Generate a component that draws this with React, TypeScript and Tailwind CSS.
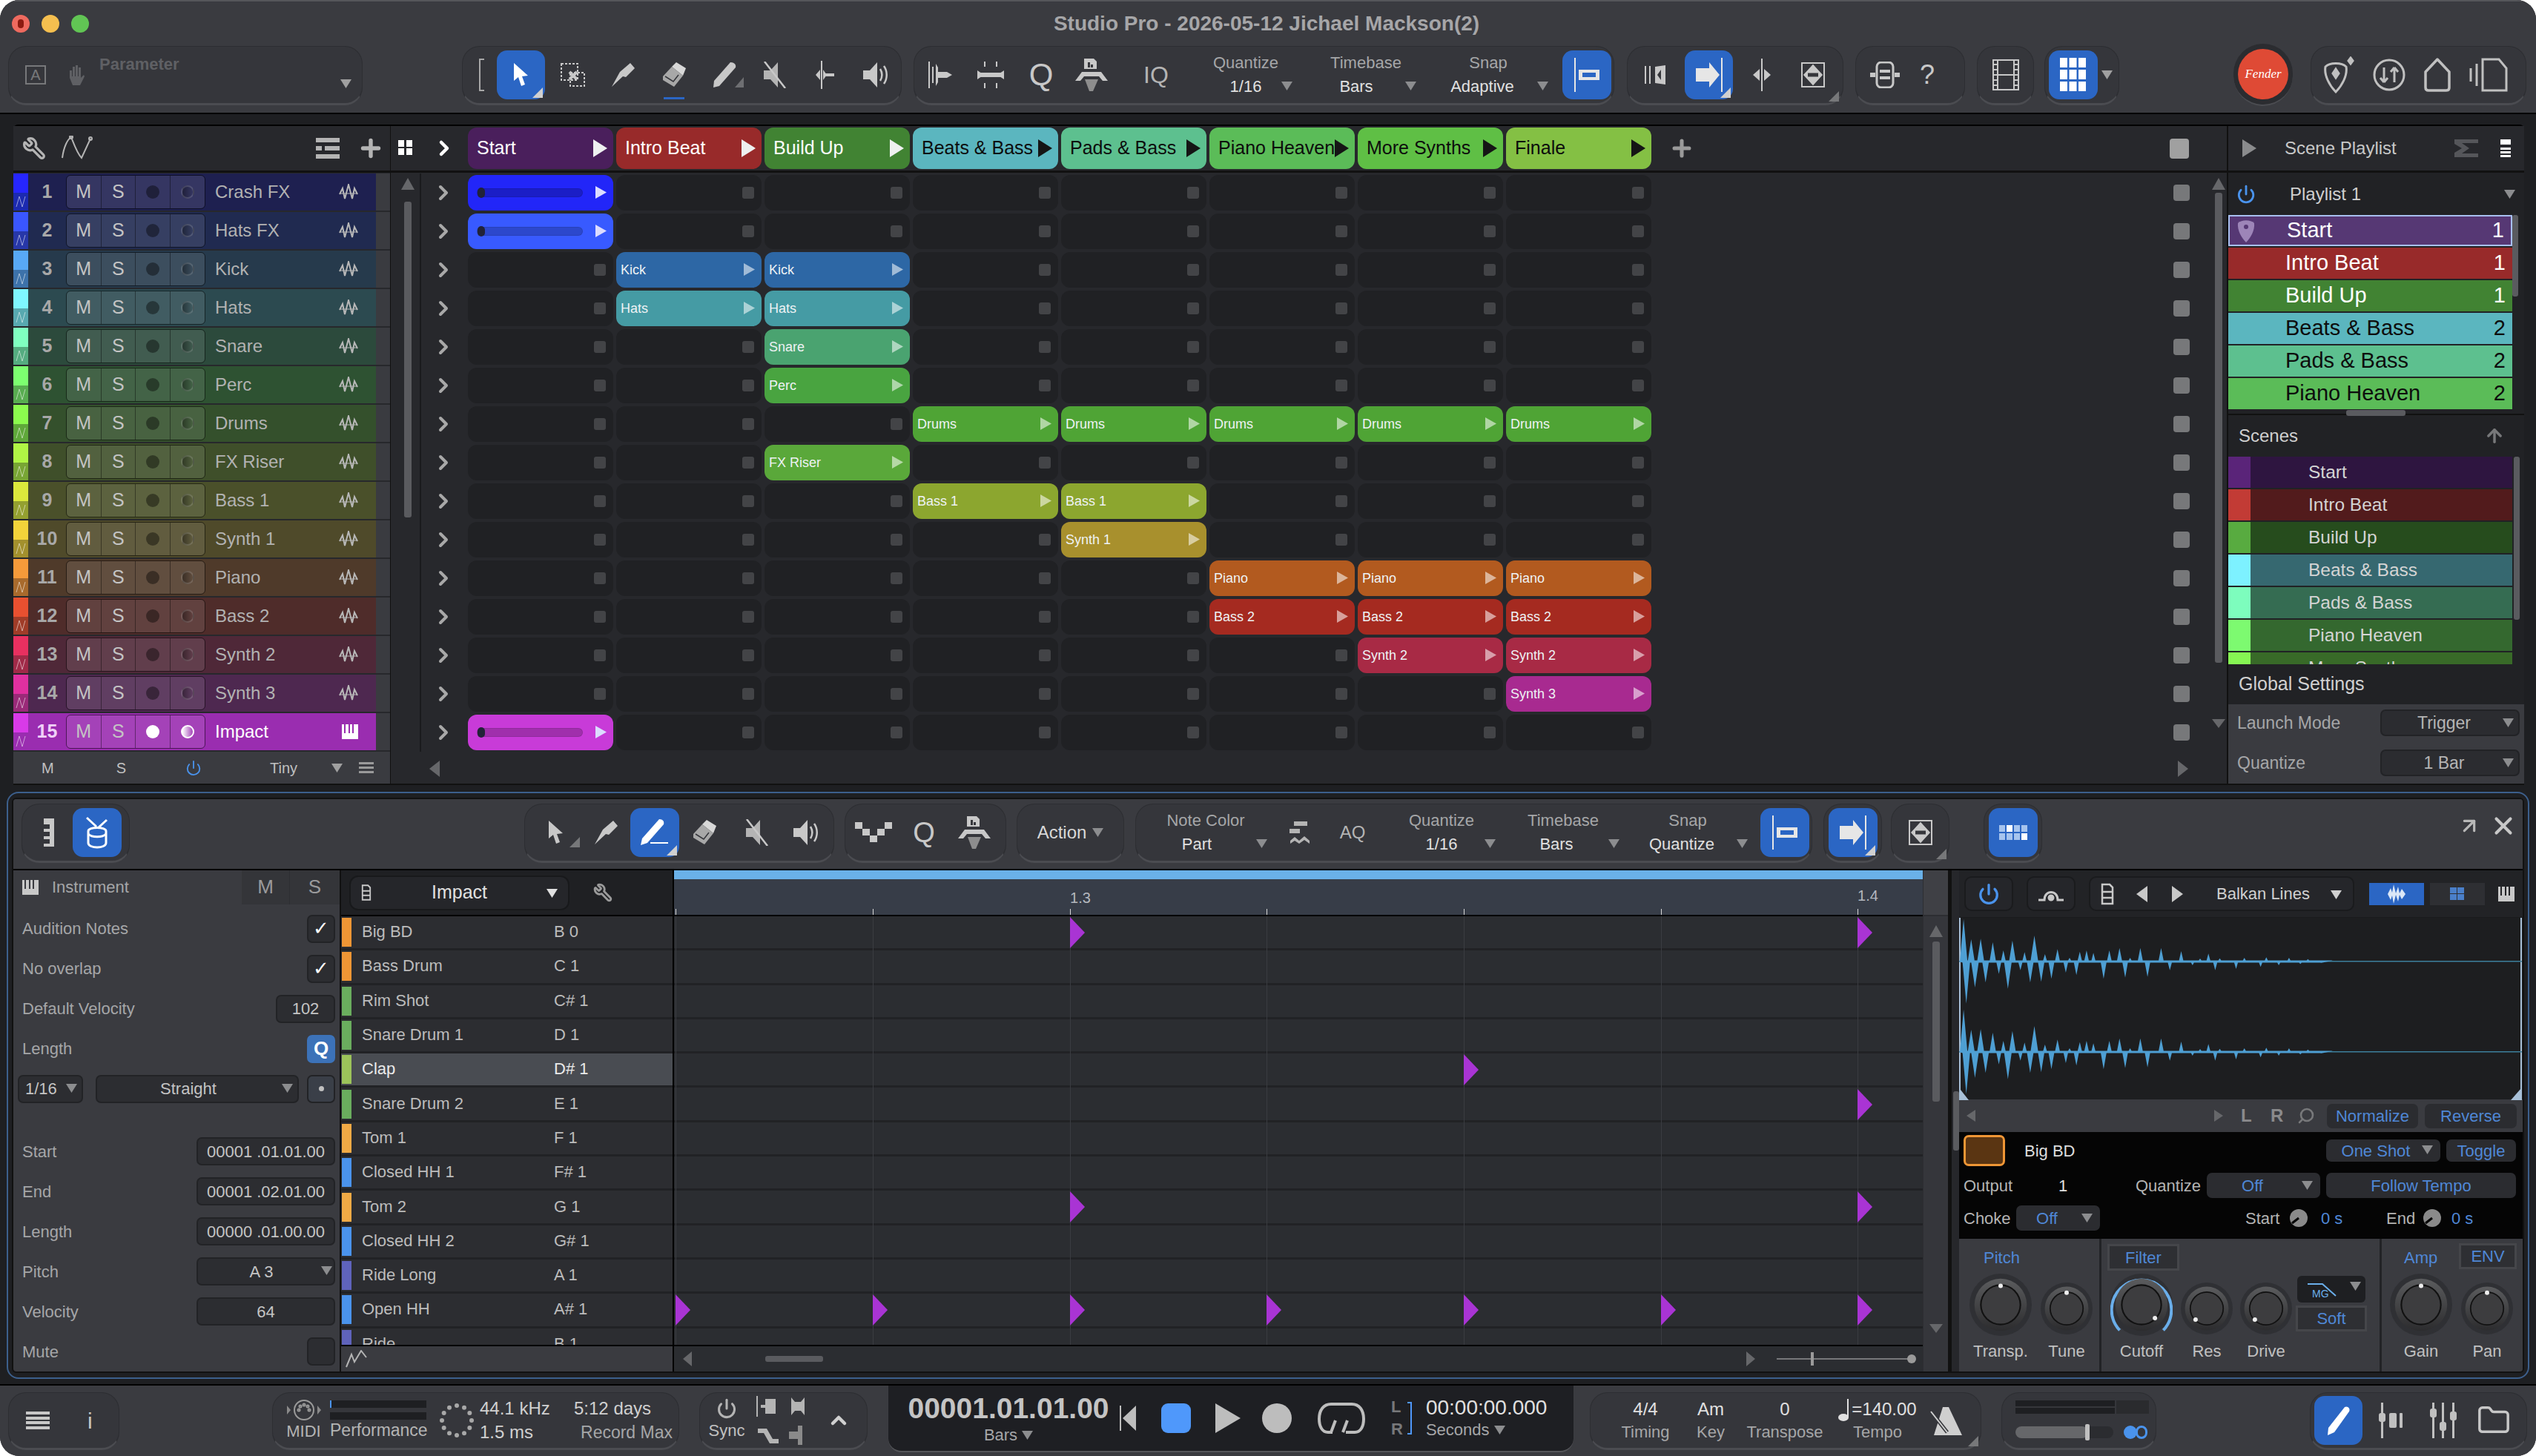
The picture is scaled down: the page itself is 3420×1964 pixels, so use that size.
import type { ReactNode } from 'react';
import { ChevronRight, ChevronUp, Power, Wrench, X, Folder, ArrowUp, ArrowUpRight, Search, Plus } from 'lucide-react';

const Caret = ({ className = '' }: { className?: string }) => (
  <svg width="15" height="12" viewBox="0 0 15 12" className={`fill-[#8c8d8f] ${className}`}>
    <path d="M0 0H15L7.5 12Z" />
  </svg>
);

const Tri = ({ w, h, className = '' }: { w: number; h: number; className?: string }) => (
  <svg width={w} height={h} viewBox={`0 0 ${w} ${h}`} className={className}>
    <path d={`M0 0L${w} ${h / 2}L0 ${h}Z`} />
  </svg>
);

const Fold = ({ className = 'fill-[#d0d0d0]' }: { className?: string }) => (
  <svg width="14" height="14" viewBox="0 0 14 14" className={`absolute bottom-[2px] right-[3px] ${className}`}>
    <path d="M14 0V14H0Z" />
  </svg>
);

const ArrowTool = ({ cls = 'fill-[#c8c8c8]' }: { cls?: string }) => (
  <svg width="22" height="32" viewBox="0 0 22 32" className={cls}><path d="M1 0V24L7 19L11 31L16 29L12 18L20 17Z" /></svg>
);
const RangeTool = () => (
  <svg width="34" height="32" viewBox="0 0 34 32" fill="none" stroke="#c8c8c8" strokeWidth="2" strokeDasharray="3 2">
    <rect x="1" y="1" width="22" height="22" /><rect x="13" y="13" width="19" height="18" />
    <path d="M12 12L22 22M22 12L12 22" strokeDasharray="none" strokeWidth="4" />
  </svg>
);
const Knife = () => (
  <svg width="34" height="32" viewBox="0 0 34 32" fill="#c8c8c8"><path d="M28 0L34 7L22 19L18 18L3 32L14 12Z" /></svg>
);
const Eraser = () => (
  <svg width="34" height="34" viewBox="0 0 34 34">
    <path d="M20 0L33 8L29 18L14 6Z" fill="#d8d8d8" />
    <path d="M14 6L29 18L17 33L2 24L2 19Z" fill="#a8a8a8" />
    <path d="M5 19L16 26L23 17" stroke="#35363b" strokeWidth="1.5" fill="none" />
  </svg>
);
const Pencil = () => (
  <svg width="32" height="34" viewBox="0 0 32 34" fill="#c8c8c8"><path d="M24 0C29 0 32 3 31 7L9 32L1 34L2 25Z" /></svg>
);
const PenLine = () => (
  <svg width="40" height="36" viewBox="0 0 40 36" fill="#fff">
    <path d="M26 0C31 0 33 3 32 7L10 32L1 35L3 26Z" /><rect x="14" y="31" width="24" height="2" />
  </svg>
);
const Mute = () => (
  <svg width="34" height="36" viewBox="0 0 34 36">
    <path d="M2 12H11L21 1V35L11 24H2Z" fill="#b4b4b4" /><path d="M3 0L31 36" stroke="#c8c8c8" strokeWidth="2.5" />
  </svg>
);
const Bend = () => (
  <svg width="28" height="38" viewBox="0 0 28 38" fill="#c8c8c8">
    <rect x="8" y="0" width="2" height="38" /><path d="M11 12L16 19L11 26ZM7 12V26L1 19Z" /><rect x="12" y="17" width="14" height="4" />
  </svg>
);
const Speaker = () => (
  <svg width="36" height="36" viewBox="0 0 36 36">
    <path d="M1 12H10L20 1V35L10 24H1Z" fill="#c8c8c8" />
    <path d="M24 10C27 15 27 21 24 26M29 6C34 13 34 23 29 30" fill="none" stroke="#c8c8c8" strokeWidth="2.5" />
  </svg>
);
const Stamp = () => (
  <svg width="46" height="44" viewBox="0 0 46 44">
    <path d="M13 0H26L30 4V14H13Z" fill="#c8c8c8" /><rect x="18" y="5" width="3" height="7" fill="#35363b" /><rect x="22" y="8" width="3" height="4" fill="#35363b" />
    <path d="M10 18H36L45 30H38L33 24H13L8 30H1Z" fill="#c8c8c8" /><path d="M14 28H32L25 44H20Z" fill="#8d8d8d" />
  </svg>
);
const Strum = () => (
  <svg width="34" height="36" viewBox="0 0 34 36" fill="#c8c8c8">
    <rect x="1" y="0" width="2" height="36" /><rect x="6" y="7" width="2" height="22" /><path d="M11 3L14 8V14L26 14L33 18L26 22H14V28L11 33Z" />
  </svg>
);
const Stretch = () => (
  <svg width="38" height="36" viewBox="0 0 38 36" fill="#c8c8c8">
    <rect x="10" y="0" width="2" height="7" /><rect x="26" y="0" width="2" height="7" /><rect x="10" y="29" width="2" height="7" /><rect x="26" y="29" width="2" height="7" />
    <path d="M1 12L10 18L1 24ZM37 12L28 18L37 24Z" /><path d="M4 15H34V21H4Z" />
  </svg>
);
const SnapLeft = () => (
  <svg width="34" height="46" viewBox="0 0 34 46">
    <rect x="0" y="0" width="2" height="46" fill="#e6e6e6" /><rect x="6" y="16" width="28" height="14" fill="#e6e6e6" /><rect x="11" y="20" width="18" height="6" fill="#2b66c4" />
  </svg>
);
const SnapRight = () => (
  <svg width="36" height="46" viewBox="0 0 36 46">
    <rect x="34" y="0" width="2" height="46" fill="#e6e6e6" /><path d="M0 14H18V6L32 23L18 40V32H0Z" fill="#e6e6e6" />
  </svg>
);
const GridBtn = () => (
  <svg width="36" height="46" viewBox="0 0 36 46" fill="#fff">
    {[0, 1, 2].map((c) => [0, 1, 2].map((r) => <rect key={`${c}${r}`} x={c * 12.5} y={r * 16} width="10" height="13" />))}
  </svg>
);
const FitIcon = () => (
  <svg width="32" height="34" viewBox="0 0 32 34" fill="none" stroke="#c8c8c8" strokeWidth="2">
    <rect x="1" y="1" width="30" height="32" /><path d="M16 5L27 17L16 29L5 17Z" strokeWidth="3" /><path d="M16 5L27 17L16 29L5 17Z" fill="#c8c8c8" /><path d="M9 17H23" stroke="#35363b" strokeWidth="5" />
  </svg>
);
const WaveMini = ({ cls = '#b8b8b8' }: { cls?: string }) => (
  <svg width="26" height="22" viewBox="0 0 26 22" fill="none" stroke={cls} strokeWidth="2">
    <path d="M1 14L5 6L8 20L13 1L18 20L21 6L25 14" /><path d="M1 13H25" strokeWidth="1" />
  </svg>
);
const Piano = ({ cls = 'fill-[#c8c8c8]' }: { cls?: string }) => (
  <svg width="22" height="20" viewBox="0 0 22 20" className={cls}>
    <path d="M0 0H3V12H5V0H9V12H11V0H14V12H16V0H22V20H0Z" />
  </svg>
);
const FileStack = () => (
  <svg width="18" height="30" viewBox="0 0 18 30" fill="none" stroke="#c8c8c8" strokeWidth="2.5">
    <path d="M2 2H12L16 6V28H2Z" /><path d="M2 12H16M2 20H16" />
  </svg>
);

const Group = ({ className, children }: { className: string; children?: ReactNode }) => (
  <div className={`h-[80px] shrink-0 rounded-[24px] bg-[#35363b] border border-[#2d2e32] border-b-[3px] border-b-[#4b4c51] flex items-center ${className}`}>
    {children}
  </div>
);
const Slot = ({ children }: { children?: ReactNode }) => (
  <div className="w-[68px] h-full shrink-0 flex items-center justify-center">{children}</div>
);
const Blue = ({ className = 'w-[65px]', children }: { className?: string; children?: ReactNode }) => (
  <div className={`relative h-[66px] shrink-0 rounded-[14px] bg-[#2b66c4] flex items-center justify-center ${className}`}>{children}</div>
);
const Drop = ({ className, label, value, labelCls = '', valueCls = '', caretCls }: { className: string; label: string; value: string; labelCls?: string; valueCls?: string; caretCls: string }) => (
  <div className={`relative shrink-0 flex flex-col items-center text-[22px] leading-[32px] ${className}`}>
    <span className={`text-[#a5a6a8] ${labelCls}`}>{label}</span>
    <span className={`text-[#e0e0e0] ${valueCls}`}>{value}</span>
    <Caret className={`absolute top-[41px] ${caretCls}`} />
  </div>
);

const tracks = [
  ['Crash FX', '#2626ff', '#1c2ab0', '#1e2050'],
  ['Hats FX', '#3a56ff', '#2737a8', '#202a50'],
  ['Kick', '#58a8f5', '#3d72aa', '#263a4c'],
  ['Hats', '#7ff6ff', '#58a9b0', '#2c4a50'],
  ['Snare', '#80ffc0', '#55ac80', '#2c4a3c'],
  ['Perc', '#7dff70', '#58ac50', '#2e5232'],
  ['Drums', '#8cfb4e', '#5fa83a', '#34502c'],
  ['FX Riser', '#b0f545', '#78a534', '#3f4f2a'],
  ['Bass 1', '#dbe83c', '#94a030', '#4a502a'],
  ['Synth 1', '#f2d33a', '#a3902d', '#4f4a2a'],
  ['Piano', '#f59a3a', '#a86a2c', '#4f3a2a'],
  ['Bass 2', '#e85030', '#a03c28', '#4f2c2a'],
  ['Synth 2', '#e83060', '#a02a48', '#4f2838'],
  ['Synth 3', '#e030a0', '#9a2a78', '#4e2850'],
  ['Impact', '#d83ae8', '#9a2db0', '#9a2db0'],
];

const scenes = [
  ['Start', '#4a1f5c', 'text-white'],
  ['Intro Beat', '#982a2a', 'text-white'],
  ['Build Up', '#418333', 'text-white'],
  ['Beats & Bass', '#5bb6bf', 'text-[#0d0d0d]'],
  ['Pads & Bass', '#5dc08f', 'text-[#0d0d0d]'],
  ['Piano Heaven', '#5bbc58', 'text-[#0d0d0d]'],
  ['More Synths', '#5fbf45', 'text-[#0d0d0d]'],
  ['Finale', '#84c044', 'text-[#0d0d0d]'],
];

// row index -> [label, colour, columns]
const clips: Record<number, [string, string, number[]]> = {
  0: ['', '#2226f8', [0]],
  1: ['', '#385aff', [0]],
  2: ['Kick', '#2d67a5', [1, 2]],
  3: ['Hats', '#459ba4', [1, 2]],
  4: ['Snare', '#4aa370', [2]],
  5: ['Perc', '#49a440', [2]],
  6: ['Drums', '#4fa435', [3, 4, 5, 6, 7]],
  7: ['FX Riser', '#5aa83a', [2]],
  8: ['Bass 1', '#8ca62f', [3, 4]],
  9: ['Synth 1', '#a8902d', [4]],
  10: ['Piano', '#b25a1f', [5, 6, 7]],
  11: ['Bass 2', '#a52a20', [5, 6, 7]],
  12: ['Synth 2', '#a82a45', [6, 7]],
  13: ['Synth 3', '#a82a90', [7]],
  14: ['', '#c83bd8', [0]],
};

const TrackRow = ({ n, t }: { n: number; t: string[] }) => {
  const sel = n === 15;
  return (
    <div className="flex h-[50px] mb-[2px]">
      <div className="w-[20px] flex flex-col">
        <div className="h-[26px]" style={{ background: t[1] }} />
        <div className="h-[24px] flex items-center justify-center" style={{ background: t[2] }}>
          <svg width="14" height="16" viewBox="0 0 14 16" fill="none" stroke="#ffffff88" strokeWidth="1"><path d="M1 15L5 1L9 15L13 1" /></svg>
        </div>
      </div>
      <div className="w-[469px] flex items-center" style={{ background: t[3] }}>
        <span className={`w-[51px] text-center text-[25px] font-bold ${sel ? 'text-[#f0d0f8]' : 'text-[#a8a8a8]'}`}>{n}</span>
        <div className="flex h-[46px] w-[188px] rounded-[6px] border border-black/50 overflow-hidden shrink-0">
          <div className="w-[47px] bg-white/10 border-r border-black/40 flex items-center justify-center text-[25px] text-[#c4c4c4]">M</div>
          <div className="w-[47px] bg-white/10 border-r border-black/40 flex items-center justify-center text-[25px] text-[#c4c4c4]">S</div>
          <div className="w-[47px] bg-white/10 border-r border-black/40 flex items-center justify-center">
            <div className={`w-[18px] h-[18px] rounded-full ${sel ? 'bg-white' : 'bg-black/40'}`} />
          </div>
          <div className="w-[47px] bg-white/10 flex items-center justify-center">
            <div className={`w-[18px] h-[18px] rounded-full border-2 ${sel ? 'border-white bg-gradient-to-r from-white to-transparent' : 'border-white/15 bg-gradient-to-r from-black/40 to-transparent'}`} />
          </div>
        </div>
        <span className={`ml-[13px] flex-1 text-[24px] ${sel ? 'text-white' : 'text-[#b2b2b2]'}`}>{t[0]}</span>
        <div className="mr-[24px]">{sel ? <Piano cls="fill-white" /> : <WaveMini />}</div>
      </div>
      <div className="w-[19px] bg-[#3a3b40]" />
    </div>
  );
};

const GridRow = ({ r }: { r: number }) => {
  const c = clips[r];
  return (
    <div className="flex h-[48px] mb-[4px] items-center">
      <div className="w-[39px] shrink-0" />
      <div className="w-[65px] shrink-0 flex justify-center border-l-2 border-[#1a1b1d] h-[52px] items-center">
        <ChevronRight className="w-[32px] h-[32px] text-[#a8a8a8] -ml-[3px]" strokeWidth={3} />
      </div>
      {scenes.map((_, i) =>
        c[2].includes(i) ? (
          <div key={i} className="w-[196px] h-[48px] mr-[4px] shrink-0 rounded-[12px] flex items-center px-[6px] relative" style={{ background: c[1] }}>
            {c[0] ? (
              <span className="text-[18px] text-[#eef2f4]">{c[0]}</span>
            ) : (
              <div className="ml-[6px] w-[143px] h-[12px] rounded-full bg-black/20 border border-black/10 flex items-center">
                <div className="w-[10px] h-[14px] rounded-full bg-[#222338]" />
              </div>
            )}
            <Tri w={15} h={17} className={`absolute right-[9px] top-[15px] ${c[0] ? 'fill-white/55' : 'fill-[#dcdcff]'}`} />
          </div>
        ) : (
          <div key={i} className="w-[196px] h-[48px] mr-[4px] shrink-0 rounded-[12px] bg-[#202124] flex items-center justify-end pr-[10px]">
            <div className="w-[16px] h-[16px] rounded-[3px] bg-[#434447]" />
          </div>
        )
      )}
      <div className="ml-[700px] w-[22px] h-[22px] rounded-[4px] bg-[#77787a] shrink-0" />
    </div>
  );
};

const Field = ({ className, children }: { className: string; children?: ReactNode }) => (
  <div className={`relative h-[38px] shrink-0 rounded-[7px] bg-[#2c2d31] border-2 border-[#222326] flex items-center justify-center text-[22px] text-[#c4c4c4] ${className}`}>{children}</div>
);
const InspRow = ({ label, children, className = '' }: { label: string; children?: ReactNode; className?: string }) => (
  <div className={`h-[54px] pl-[12px] pr-[6px] flex items-center justify-between text-[22px] text-[#a5a6a8] ${className}`}>
    <span>{label}</span>
    {children}
  </div>
);

const drums: [string, string, string][] = [
  ['Big BD', 'B 0', '#ef9635'], ['Bass Drum', 'C 1', '#ef9635'], ['Rim Shot', 'C# 1', '#6aad5e'], ['Snare Drum 1', 'D 1', '#6aad5e'],
  ['Clap', 'D# 1', '#9cc35a'], ['Snare Drum 2', 'E 1', '#6aad5e'], ['Tom 1', 'F 1', '#f0aa45'], ['Closed HH 1', 'F# 1', '#4a93ec'],
  ['Tom 2', 'G 1', '#f0aa45'], ['Closed HH 2', 'G# 1', '#4a93ec'], ['Ride Long', 'A 1', '#5f63bb'], ['Open HH', 'A# 1', '#4a93ec'], ['Ride', 'B 1', '#5f63bb'],
];
const gridX = [2, 268, 534, 799, 1065, 1331, 1596];
const notes: [number, number][] = [[0, 2], [0, 6], [4, 4], [5, 6], [8, 2], [8, 6], [11, 0], [11, 1], [11, 2], [11, 3], [11, 4], [11, 5], [11, 6]];

const up: [number, number][] = [[55, 538], [75, 620], [100, 618], [132, 632], [160, 665], [184, 625], [216, 672], [242, 605], [270, 680], [303, 660], [335, 695], [362, 670], [380, 665], [398, 675], [440, 665], [467, 655], [495, 695], [522, 655], [577, 655], [630, 668], [680, 698], [702, 678], [732, 697], [797, 695], [855, 693], [915, 695], [965, 700], [1030, 706]];
const down: [number, number][] = [[62, 880], [85, 815], [113, 795], [148, 760], [172, 820], [205, 745], [231, 795], [260, 792], [287, 780], [325, 755], [353, 765], [425, 780], [482, 775], [541, 772], [600, 745], [660, 725], [720, 745], [775, 740], [840, 732], [888, 725], [945, 720], [1000, 715]];

function wavePath(cy: number) {
  const px = (z: number) => (z - 43) / 1.96;
  const amp = (z: number) => Math.abs(z - 710) / 3;
  let d = `M0 ${cy}`;
  up.forEach(([x, y]) => {
    const w = Math.min(5, 1.5 + amp(y) / 10);
    d += `L${(px(x) - w).toFixed(1)} ${cy - 1.5}L${px(x).toFixed(1)} ${(cy - amp(y)).toFixed(1)}L${(px(x) + w).toFixed(1)} ${cy - 1.5}`;
  });
  [...down].reverse().forEach(([x, y]) => {
    const w = Math.min(5, 1.5 + amp(y) / 10);
    d += `L${(px(x) + w).toFixed(1)} ${cy + 1.5}L${px(x).toFixed(1)} ${(cy + amp(y)).toFixed(1)}L${(px(x) - w).toFixed(1)} ${cy + 1.5}`;
  });
  return d + 'Z';
}

const Knob = ({ id, size, angle, arc }: { id: string; size: number; angle: number; arc?: boolean }) => {
  const c = size / 2;
  const a = ((angle - 90) * Math.PI) / 180;
  const dr = c * 0.5;
  return (
    <svg width={size} height={size} viewBox={`0 0 ${size} ${size}`} className={size < 80 ? 'mt-[10px]' : ''}>
      <defs>
        <linearGradient id={id} x1="0" y1="0" x2="0" y2="1"><stop offset="0" stopColor="#5b5c5e" /><stop offset="1" stopColor="#2c2c2e" /></linearGradient>
      </defs>
      <circle cx={c} cy={c} r={c} fill="#2f3034" />
      {arc && <path d={`M${c - c * 0.7} ${c + c * 0.82}A${c * 0.96} ${c * 0.96} 0 1 1 ${c + c * 0.7} ${c + c * 0.82}`} fill="none" stroke="#6aaeea" strokeWidth="4" />}
      <circle cx={c} cy={c} r={c * 0.84} fill={`url(#${id})`} />
      <circle cx={c} cy={c} r={c * 0.66} fill="#111" />
      <circle cx={c} cy={c} r={c * 0.61} fill="#3d3d3f" />
      <circle cx={c + dr * 1.22 * Math.cos(a)} cy={c + dr * 1.22 * Math.sin(a)} r="3" fill="#eee" />
    </svg>
  );
};
const Mini = () => (
  <svg width="24" height="30" viewBox="0 0 24 30"><circle cx="12" cy="15" r="12" fill="#8a8a8a" /><path d="M3 22L12 15" stroke="#000" strokeWidth="3" /></svg>
);
const Pad = ({ className, children }: { className: string; children?: ReactNode }) => (
  <div className={`relative shrink-0 rounded-[7px] bg-[#2b2c30] flex items-center justify-center text-[22px] text-[#4f87d6] ${className}`}>{children}</div>
);
const KnobCol = ({ className, label, children }: { className: string; label: string; children: ReactNode }) => (
  <div className={`shrink-0 flex flex-col items-center ${className}`}>
    <div className="h-[90px] flex items-center">{children}</div>
    <span className="mt-[1px] text-[22px] text-[#c0c0c0]">{label}</span>
  </div>
);

const BarText = ({ className, top, bottom, topCls = 'text-[#e0e0e0]' }: { className: string; top: string; bottom: string; topCls?: string }) => (
  <div className={`shrink-0 flex flex-col items-center ${className}`}>
    <span className={`text-[24px] leading-[32px] ${topCls}`}>{top}</span>
    <span className="text-[22px] leading-[30px] text-[#a5a6a8]">{bottom}</span>
  </div>
);

export default function App() {
  return (
    <div className="w-[3420px] h-[1964px] bg-white overflow-hidden font-['Liberation_Sans','Noto_Sans',sans-serif]">
      <div className="w-full h-full rounded-[26px] overflow-hidden bg-[#1e1f22] flex flex-col">
        {/* Title bar */}
        <div className="h-[62px] shrink-0 bg-[#3a3b40] border-t-2 border-[#55565a] flex items-center pl-[16px]">
          <div className="w-[116px] flex gap-[16px]">
            <div className="w-[24px] h-[24px] rounded-full bg-[#ee6a5f] flex items-center justify-center"><div className="w-[8px] h-[12px] rounded-full bg-[#8c1a10]" /></div>
            <div className="w-[24px] h-[24px] rounded-full bg-[#f5bf4f]" />
            <div className="w-[24px] h-[24px] rounded-full bg-[#61c554]" />
          </div>
          <div className="flex-1 text-center pr-[136px] text-[28px] font-bold text-[#a6a6a8]">Studio Pro - 2026-05-12 Jichael Mackson(2)</div>
        </div>

        {/* Main toolbar */}
        <div className="h-[92px] shrink-0 bg-[#3a3b40] border-b-2 border-black flex items-start">
          <Group className="ml-[11px] w-[478px] relative">
            <div className="ml-[22px] w-[28px] h-[26px] border-2 border-[#77787a] text-[#77787a] text-[20px] leading-[22px] text-center">A</div>
            <svg width="26" height="28" viewBox="0 0 26 28" fill="#5f6064" className="ml-[27px]"><path d="M5 8h3v8h1V3h3v13h1V1h3v15h1V4h3v14l4-4 1 2-6 12H9L5 18Z" /></svg>
            <span className="ml-[19px] mb-[30px] text-[22px] font-bold text-[#5f6064]">Parameter</span>
            <Caret className="absolute right-[14px] bottom-[20px] fill-[#a0a0a0]" />
          </Group>

          <Group className="ml-[134px] w-[593px] pl-[12px]">
            <div className="w-[26px] h-full flex items-center justify-center"><div className="w-[7px] h-[44px] border-2 border-r-0 border-[#a8a8a8]" /></div>
            <Blue className="ml-[8px] w-[65px] mr-[4px]"><ArrowTool cls="fill-white" /><Fold /></Blue>
            <Slot><RangeTool /></Slot>
            <Slot><div className="-ml-[5px]"><Knife /></div></Slot>
            <Slot>
              <div className="relative h-full flex items-center"><Eraser /><div className="absolute bottom-[5px] left-[3px] w-[28px] h-[3px] bg-[#2b66c4]" /></div>
            </Slot>
            <Slot><div className="relative"><Pencil /><svg width="12" height="14" viewBox="0 0 12 14" className="absolute -right-[10px] bottom-0 fill-[#6e6f72]"><path d="M12 0V14H0Z" /></svg></div></Slot>
            <Slot><Mute /></Slot>
            <Slot><Bend /></Slot>
            <Slot><Speaker /></Slot>
          </Group>

          <Group className="ml-[16px] w-[945px] pl-[1px]">
            <Slot><Strum /></Slot>
            <Slot><Stretch /></Slot>
            <Slot><span className="text-[42px] leading-none text-[#c8c8c8]">Q</span></Slot>
            <Slot><Stamp /></Slot>
            <div className="w-[106px] text-center text-[32px] text-[#b4b4b4]">IQ</div>
            <Drop className="w-[136px]" label="Quantize" value="1/16" caretCls="right-[5px]" />
            <Drop className="w-[162px]" label="Timebase" value="Bars" labelCls="ml-[26px]" caretCls="right-0" />
            <Drop className="w-[186px]" label="Snap" value="Adaptive" labelCls="ml-[8px]" valueCls="mr-[8px]" caretCls="right-[8px]" />
            <Blue className="ml-[11px] w-[66px]"><SnapLeft /></Blue>
          </Group>

          <Group className="ml-[17px] w-[292px] pl-[20px]">
            <div className="w-[32px] flex justify-center">
              <svg width="30" height="26" viewBox="0 0 30 26" fill="#c8c8c8"><path d="M16 2L30 0V26L16 24Z" /><path d="M24 6L19 13L24 20Z" fill="#35363b" /><rect x="2" y="1" width="2" height="24" /><rect x="8" y="1" width="2" height="24" /></svg>
            </div>
            <Blue className="ml-[25px] w-[65px]"><SnapRight /><Fold /></Blue>
            <div className="w-[78px] flex justify-center">
              <svg width="26" height="44" viewBox="0 0 26 44" fill="#c8c8c8"><rect x="12" y="0" width="2" height="44" /><path d="M10 14V30L1 22ZM16 14V30L25 22Z" /></svg>
            </div>
            <div className="relative ml-[-8px] w-[76px] h-full flex items-center justify-center"><FitIcon /><Fold className="fill-[#77787a]" /></div>
          </Group>

          <Group className="ml-[16px] w-[148px]">
            <div className="w-[78px] flex justify-center">
              <svg width="44" height="36" viewBox="0 0 44 36" fill="none" stroke="#c8c8c8" strokeWidth="3"><rect x="11" y="1" width="22" height="34" rx="6" /><path d="M15 13H29M15 22H29" strokeWidth="4" /><path d="M2 18H9M35 18H42" strokeWidth="6" /></svg>
            </div>
            <span className="ml-[8px] text-[36px] text-[#c8c8c8]">?</span>
          </Group>

          <Group className="ml-[16px] w-[77px] justify-center">
            <svg width="36" height="42" viewBox="0 0 36 42" fill="none" stroke="#c8c8c8" strokeWidth="2"><rect x="1" y="1" width="34" height="40" /><rect x="7" y="1" width="22" height="40" /><path d="M7 21H29" /><path d="M1 7H7M1 14H7M1 21H7M1 28H7M1 35H7M29 7H35M29 14H35M29 21H35M29 28H35M29 35H35" /></svg>
          </Group>

          <Group className="ml-[14px] w-[101px] pl-[5px]">
            <Blue className="w-[66px]"><GridBtn /></Blue>
            <Caret className="ml-[5px] fill-[#a0a0a0]" />
          </Group>

          <div className="ml-[154px] mt-[-3px] w-[80px] h-[84px] rounded-full bg-[#2b2c30] border-b-2 border-[#4b4c51] flex items-center justify-center shrink-0">
            <div className="w-[68px] h-[68px] rounded-full bg-[#df4a35] flex items-center justify-center text-white italic text-[17px] font-['Liberation_Serif',serif]">Fender</div>
          </div>

          <Group className="ml-[24px] w-[291px] pl-[15px] gap-[24px] text-[#c0c0c0]">
            <svg width="44" height="50" viewBox="0 0 44 50" fill="none" stroke="#c0c0c0" strokeWidth="3"><path d="M4 14C10 8 26 8 32 14C34 26 26 40 18 48C10 40 2 26 4 14Z" /><path d="M18 17L22 23L18 29L14 23Z" fill="#c0c0c0" /><path d="M38 2L41 6L38 10L35 6Z" fill="#c0c0c0" /></svg>
            <svg width="44" height="44" viewBox="0 0 44 44" fill="none" stroke="#c0c0c0" strokeWidth="3"><circle cx="22" cy="22" r="20" /><path d="M15 12V32M15 32L10 26M15 32L20 26M29 32V12M29 12L24 18M29 12L34 18" /></svg>
            <svg width="38" height="46" viewBox="0 0 38 46" fill="none" stroke="#c0c0c0" strokeWidth="3.5" strokeLinejoin="round"><path d="M3 19L19 2L35 19V40C35 43 33 44 31 44H7C5 44 3 43 3 40Z" /></svg>
            <svg width="52" height="46" viewBox="0 0 52 46" fill="none" stroke="#c0c0c0" strokeWidth="3"><path d="M18 2H40L50 14V44H18Z" /><path d="M10 8V38M2 14V32" /></svg>
          </Group>
        </div>

        {/* Arranger / scene panel */}
        <div className="h-[905px] shrink-0 pt-[14px]">
          <div className="ml-[18px] w-[3386px] h-[891px] border-t-2 border-black bg-[#27282c] flex rounded-tl-[6px] rounded-tr-[6px] border-b-2 border-b-[#111]">
            {/* Track column */}
            <div className="w-[508px] shrink-0 flex flex-col bg-[#27282c]">
              <div className="h-[60px] flex items-center text-[#b4b4b4] border-b-[3px] border-[#111] box-content">
                <Wrench className="ml-[12px] w-[32px] h-[32px] -rotate-90" strokeWidth={2.4} />
                <svg width="48" height="34" viewBox="0 0 48 34" fill="none" stroke="#b4b4b4" strokeWidth="2" className="ml-[20px]"><path d="M2 30C4 15 9 5 14 2C18 12 22 24 28 30L40 4" /><circle cx="14" cy="2" r="2" /><circle cx="40" cy="4" r="2" /></svg>
                <svg width="34" height="28" viewBox="0 0 34 28" fill="#b4b4b4" className="ml-[296px]"><rect width="32" height="6" /><rect x="12" y="11" width="20" height="6" /><rect y="11" width="8" height="6" /><rect y="22" width="32" height="6" /></svg>
                <Plus className="ml-[22px] w-[36px] h-[36px]" strokeWidth={3.6} />
              </div>
              <div className="pt-[1px]">
                {tracks.map((t, i) => <TrackRow key={t[0]} n={i + 1} t={t} />)}
              </div>
              <div className="flex-1 bg-[#3a3b40] flex items-center text-[20px] text-[#c0c0c0] relative">
                <span className="ml-[38px]">M</span>
                <span className="ml-[84px]">S</span>
                <Power className="ml-[80px] w-[22px] h-[22px] text-[#4a93ec]" />
                <span className="ml-[92px]">Tiny</span>
                <Caret className="ml-[46px] fill-[#a0a0a0]" />
                <svg width="20" height="16" viewBox="0 0 20 16" fill="#9a9a9a" className="ml-[22px]"><rect width="20" height="3" /><rect y="6" width="20" height="3" /><rect y="12" width="20" height="3" /></svg>
              </div>
            </div>

            {/* Clip launcher */}
            <div className="relative w-[2477px] shrink-0 border-l border-[#111] flex flex-col">
              <div className="h-[63px] shrink-0 flex items-center border-b-[3px] border-[#111] bg-[#27282c]">
                <div className="w-[39px] flex justify-center">
                  <svg width="20" height="22" viewBox="0 0 20 22" fill="#fff"><rect width="8" height="9" /><rect x="11" width="8" height="9" /><rect y="11" width="8" height="9" /><rect x="11" y="11" width="8" height="9" /></svg>
                </div>
                <div className="w-[65px] flex justify-center"><ChevronRight className="w-[32px] h-[32px] text-white" strokeWidth={3.4} /></div>
                {scenes.map((s) => (
                  <div key={s[0]} className={`relative w-[196px] h-[56px] mr-[4px] shrink-0 rounded-[12px] flex items-center pl-[12px] text-[25px] ${s[2]}`} style={{ background: s[1] }}>
                    {s[0]}
                    <Tri w={19} h={24} className={`absolute right-[8px] top-[16px] ${s[2] === 'text-white' ? 'fill-[#eef0f0]' : 'fill-[#151515]'}`} />
                  </div>
                ))}
                <Plus className="ml-[20px] w-[34px] h-[34px] text-[#9a9a9a]" strokeWidth={3.6} />
                <div className="ml-[641px] w-[26px] h-[27px] rounded-[4px] bg-[#a0a0a0]" />
              </div>
              <div className="pt-[3px]">
                {tracks.map((_, i) => <GridRow key={i} r={i} />)}
              </div>
              <div className="flex-1 bg-[#27282c] flex items-center relative">
                <Tri w={14} h={22} className="ml-[52px] fill-[#66676a] rotate-180" />
                <Tri w={14} h={22} className="ml-[2344px] fill-[#66676a]" />
              </div>
              {/* scrollbars */}
              <div className="absolute left-[14px] top-[70px] flex flex-col items-center">
                <svg width="18" height="16" viewBox="0 0 18 16" fill="#66676a"><path d="M9 0L18 16H0Z" /></svg>
                <div className="mt-[16px] w-[10px] h-[426px] rounded-[3px] bg-[#5a5b5f]" />
              </div>
              <div className="absolute left-[2456px] top-[70px] flex flex-col items-center">
                <svg width="18" height="16" viewBox="0 0 18 16" fill="#66676a"><path d="M9 0L18 16H0Z" /></svg>
                <div className="mt-[4px] w-[10px] h-[634px] rounded-[3px] bg-[#5a5b5f]" />
                <svg width="18" height="12" viewBox="0 0 18 12" fill="#66676a" className="mt-[76px]"><path d="M9 12L18 0H0Z" /></svg>
              </div>
            </div>

            {/* Scene playlist */}
            <div className="flex-1 min-w-0 border-l-2 border-[#111] bg-[#212225] flex flex-col text-[#d0d0d0] rounded-tr-[6px]">
              <div className="h-[60px] shrink-0 flex items-center bg-[#27282c] border-b-[3px] border-[#111] box-content">
                <Tri w={19} h={24} className="ml-[19px] fill-[#8a8b8d]" />
                <span className="ml-[38px] text-[24px] text-[#c8c8c8]">Scene Playlist</span>
                <svg width="32" height="24" viewBox="0 0 32 24" fill="#55565a" className="ml-[78px]"><path d="M0 0H32V5H10L20 12L10 19H32V24H0V18L10 12L0 6Z" /></svg>
                <svg width="16" height="24" viewBox="0 0 16 24" fill="#fff" className="ml-[30px]"><rect width="14" height="7" /><rect y="11" width="14" height="3" /><rect y="16" width="14" height="3" /><rect y="21" width="14" height="3" /></svg>
              </div>
              <div className="h-[57px] shrink-0 flex items-center">
                <Power className="ml-[11px] w-[26px] h-[26px] text-[#4a93ec]" strokeWidth={2.6} />
                <span className="ml-[46px] flex-1 text-[24px]">Playlist 1</span>
                <Caret className="mr-[12px]" />
              </div>
              <div className="relative h-[264px] shrink-0 flex flex-col">
                {scenes.slice(0, 6).map((s, i) => (
                  <div key={s[0]} className={`relative h-[42px] mb-[2px] w-[383px] shrink-0 flex items-center pl-[77px] pr-[9px] justify-between text-[29px] ${s[2]} ${i === 0 ? 'border-2 border-[#a8c0f0]' : ''}`} style={{ background: i === 0 ? '#563874' : s[1] }}>
                    {i === 0 && (
                      <svg width="24" height="32" viewBox="0 0 24 32" className="absolute left-[10px] top-[3px]"><path d="M1 6C6 1 18 1 23 6C24 16 18 26 12 32C6 26 0 16 1 6Z" fill="#9d85b8" /><circle cx="12" cy="11" r="3" fill="#563874" /></svg>
                    )}
                    <span>{s[0]}</span>
                    <span>{[1, 1, 1, 2, 2, 2][i]}</span>
                  </div>
                ))}
                <div className="absolute right-[8px] top-0 w-[8px] h-[110px] rounded-[3px] bg-[#5a5b5f]" />
              </div>
              <div className="h-[6px] shrink-0 border-b-2 border-[#111] flex justify-center relative">
                <div className="absolute left-[159px] top-[-1px] w-[80px] h-[8px] rounded-[3px] bg-[#5a5b5f]" />
              </div>
              <div className="h-[56px] shrink-0 flex items-center justify-between pl-[14px] pr-[26px] text-[24px]">
                <span>Scenes</span>
                <ArrowUp className="w-[28px] h-[28px] text-[#77787a]" strokeWidth={3} />
              </div>
              <div className="relative h-[280px] shrink-0 overflow-hidden">
                {scenes.slice(0, 7).map((s, i) => {
                  const sw = ['#5a2479', '#c23b35', '#58ab40', '#7df1ff', '#7dfdbd', '#7dfa70', '#86f553'][i];
                  const bd = ['#2e1540', '#521b1c', '#264c1d', '#366870', '#356c52', '#34682f', '#386a28'][i];
                  return (
                    <div key={s[0]} className="flex h-[42px] mb-[2px] w-[383px] text-[24.5px] text-[#d4d4d4]">
                      <div className="w-[30px]" style={{ background: sw }} />
                      <div className="flex-1 pl-[78px] flex items-center" style={{ background: bd }}>{s[0]}</div>
                    </div>
                  );
                })}
                <div className="absolute right-[6px] top-0 w-[8px] h-[220px] rounded-[3px] bg-[#5a5b5f]" />
              </div>
              <div className="h-[54px] shrink-0 flex items-center pl-[14px] text-[25px]">Global Settings</div>
              <div className="flex-1 bg-[#3a3b40] flex flex-col pl-[12px] pr-[6px] pb-[3px] justify-center gap-[18px] text-[23px] text-[#a5a6a8]">
                {[['Launch Mode', 'Trigger'], ['Quantize', '1 Bar']].map(([l, v]) => (
                  <div key={l} className="flex items-center justify-between">
                    <span>{l}</span>
                    <div className="relative w-[188px] h-[36px] rounded-[7px] bg-[#2b2c30] border-2 border-[#222326] flex items-center justify-center pr-[16px] text-[#b4b4b4]">
                      {v}
                      <Caret className="absolute right-[6px] top-[10px]" />
                    </div>
                  </div>
                ))}
              </div>
            </div>
          </div>
        </div>

        {/* Editor panel */}
        <div className="h-[792px] shrink-0 ml-[9px] mt-[9px] w-[3402px] border-2 border-[#3c5f8c] rounded-[16px] pt-[6px] pb-[6px] pl-[5px] pr-[5px]">
          <div className="w-full h-[776px] border-2 border-[#111] rounded-[6px] overflow-hidden flex flex-col bg-[#3a3b40]">
            <div className="h-[96px] shrink-0 flex items-start pt-[6px] border-b-2 border-black bg-[#3a3b40]">
              <Group className="ml-[11px] w-[146px] pl-[6px]">
                <div className="w-[62px] flex justify-center">
                  <svg width="16" height="38" viewBox="0 0 16 38" fill="#c8c8c8"><path d="M0 0H14V38H0V34H8V28H0V24H8V18H0V14H8V8H0Z" /></svg>
                </div>
                <Blue className="w-[66px]">
                  <svg width="30" height="44" viewBox="0 0 30 44" fill="none" stroke="#fff" strokeWidth="3"><path d="M1 2L14 14M28 5L17 15" /><path d="M3 20C3 14 27 14 27 20V36C27 44 3 44 3 36Z" /><path d="M3 24C8 29 22 29 27 24" /></svg>
                </Blue>
              </Group>
              <Group className="ml-[532px] w-[418px] pl-[8px]">
                <div className="relative w-[68px] flex justify-center"><ArrowTool /><svg width="14" height="14" viewBox="0 0 14 14" className="absolute right-[2px] bottom-[-4px] fill-[#77787a]"><path d="M14 0V14H0Z" /></svg></div>
                <div className="w-[64px] flex justify-center"><Knife /></div>
                <Blue className="w-[66px] ml-[2px]"><PenLine /><Fold /></Blue>
                <div className="w-[68px] flex justify-center"><Eraser /></div>
                <div className="w-[74px] flex justify-center"><Mute /></div>
                <div className="w-[58px] flex justify-center"><Speaker /></div>
              </Group>
              <Group className="ml-[14px] w-[218px] pl-[6px]">
                <div className="w-[64px] flex justify-center">
                  <svg width="50" height="28" viewBox="0 0 50 28" fill="#c8c8c8"><rect y="0" width="10" height="9" /><rect x="10" y="9" width="10" height="9" /><rect x="20" y="18" width="10" height="9" /><rect x="30" y="9" width="10" height="9" /><rect x="40" y="0" width="10" height="9" /></svg>
                </div>
                <span className="w-[72px] text-center text-[38px] leading-none text-[#c8c8c8]">Q</span>
                <div className="w-[64px] flex justify-center"><Stamp /></div>
              </Group>
              <Group className="ml-[14px] w-[145px] justify-center gap-[8px]">
                <span className="text-[24px] text-[#d8d8d8]">Action</span>
                <Caret />
              </Group>
              <Group className="ml-[15px] w-[913px]">
                <Drop className="w-[188px]" label="Note Color" value="Part" valueCls="mr-[24px]" caretCls="right-[11px]" />
                <div className="w-[66px] flex justify-center">
                  <svg width="28" height="30" viewBox="0 0 28 30" fill="#b4b4b4"><rect x="6" y="0" width="18" height="6" /><rect x="0" y="10" width="14" height="6" /><path d="M1 30V26L7 21L13 26L20 20L27 26V30L20 25L13 30L7 26Z" /></svg>
                </div>
                <span className="w-[76px] text-center text-[24px] text-[#b4b4b4]">AQ</span>
                <Drop className="w-[164px]" label="Quantize" value="1/16" caretCls="right-[9px]" />
                <Drop className="w-[164px]" label="Timebase" value="Bars" valueCls="mr-[18px]" caretCls="right-[6px]" />
                <Drop className="w-[172px]" label="Snap" value="Quantize" valueCls="mr-[16px]" caretCls="right-[5px]" />
                <Blue className="ml-[12px] w-[66px]"><SnapLeft /></Blue>
              </Group>
              <Group className="ml-[15px] w-[79px] justify-center">
                <Blue className="w-[66px]"><SnapRight /><Fold /></Blue>
              </Group>
              <Group className="ml-[12px] w-[79px] justify-center relative"><FitIcon /><Fold className="fill-[#77787a]" /></Group>
              <Group className="ml-[46px] w-[79px] justify-center">
                <Blue className="w-[66px]">
                  <svg width="38" height="20" viewBox="0 0 38 20">
                    {[0, 1, 2, 3].map((c) => [0, 1].map((r) => (
                      <rect key={`${c}${r}`} x={c * 10} y={r * 11} width="8" height="9" fill={(c === 1 && r === 0) || (c === 3 && r === 1) ? '#fff' : '#a6c4ee'} />
                    )))}
                  </svg>
                </Blue>
              </Group>
              <ArrowUpRight className="ml-[560px] mt-[14px] w-[32px] h-[32px] text-[#b8b8b8]" strokeWidth={2.4} />
              <X className="ml-[11px] mt-[11px] w-[38px] h-[38px] text-[#c8c8c8]" strokeWidth={2.6} />
            </div>

            <div className="flex flex-1 min-h-0">
              {/* Inspector */}
              <div className="w-[440px] shrink-0 flex flex-col">
                <div className="h-[46px] flex items-center justify-between pl-[12px] text-[22px] text-[#a5a6a8]">
                  <div className="flex items-center gap-[18px]"><Piano /><span>Instrument</span></div>
                  <div className="flex h-full text-[26px] text-[#9a9a9c]">
                    <div className="w-[65px] bg-[#343539] flex items-center justify-center border-r border-[#2d2e32]">M</div>
                    <div className="w-[67px] bg-[#343539] flex items-center justify-center">S</div>
                  </div>
                </div>
                <InspRow label="Audition Notes" className="mt-[6px]"><Field className="w-[38px]"><span className="text-white text-[26px]">✓</span></Field></InspRow>
                <InspRow label="No overlap"><Field className="w-[38px]"><span className="text-white text-[26px]">✓</span></Field></InspRow>
                <InspRow label="Default Velocity"><Field className="w-[80px]">102</Field></InspRow>
                <InspRow label="Length"><div className="w-[38px] h-[38px] rounded-[7px] bg-[#3c72b8] flex items-center justify-center text-white font-bold text-[26px]">Q</div></InspRow>
                <div className="h-[54px] flex items-center pl-[6px] pr-[6px]">
                  <Field className="w-[88px] justify-start pl-[8px]">1/16<Caret className="absolute right-[6px] top-[10px]" /></Field>
                  <Field className="ml-[17px] w-[274px] pr-[24px]">Straight<Caret className="absolute right-[6px] top-[10px]" /></Field>
                  <Field className="ml-[11px] w-[38px] bg-[#3a3f48]"><div className="w-[7px] h-[7px] rounded-full bg-[#c0c0c0]" /></Field>
                </div>
                <InspRow label="Start" className="mt-[31px]"><Field className="w-[187px] text-[21px]">00001 .01.01.00</Field></InspRow>
                <InspRow label="End"><Field className="w-[187px] text-[21px]">00001 .02.01.00</Field></InspRow>
                <InspRow label="Length"><Field className="w-[187px] text-[21px]">00000 .01.00.00</Field></InspRow>
                <InspRow label="Pitch"><Field className="w-[187px] pr-[12px]">A 3<Caret className="absolute right-[2px] top-[10px]" /></Field></InspRow>
                <InspRow label="Velocity"><Field className="w-[187px]">64</Field></InspRow>
                <InspRow label="Mute"><Field className="w-[38px]" /></InspRow>
              </div>

              {/* Drum list */}
              <div className="w-[449px] shrink-0 flex flex-col border-l-2 border-[#111]">
                <div className="h-[62px] shrink-0 bg-[#1f2023] flex items-center border-b-2 border-black">
                  <div className="relative ml-[11px] w-[297px] h-[47px] rounded-[12px] bg-[#25262a] border-2 border-[#18191b] flex items-center justify-center text-[25px] text-[#e0e0e0]">
                    <div className="absolute left-[12px] top-[6px] scale-75"><FileStack /></div>
                    Impact
                    <Caret className="absolute right-[14px] top-[16px] fill-[#e0e0e0]" />
                  </div>
                  <Wrench className="ml-[32px] w-[26px] h-[26px] text-[#9a9a9a] -rotate-90" strokeWidth={2.6} />
                </div>
                <div className="h-[578px] shrink-0 overflow-hidden bg-[#1f2023]">
                  {drums.map(([n, p, c], i) => (
                    <div key={n} className={`h-[46.3px] flex items-center border-b-[3px] border-[#212225] text-[22px] ${i === 4 ? 'bg-[#494c52] text-[#eaeaea]' : 'bg-[#2c2d31] text-[#bcbcbc]'}`}>
                      <div className="ml-[1px] w-[13px] h-[39px]" style={{ background: c }} />
                      <span className="ml-[14px] w-[259px] mb-[2px]">{n}</span>
                      <span className="mb-[2px]">{p}</span>
                    </div>
                  ))}
                </div>
                <div className="flex-1 border-t-2 border-black flex items-center pl-[6px]">
                  <svg width="30" height="24" viewBox="0 0 30 24" fill="none" stroke="#b4b4b4" strokeWidth="2"><path d="M1 23L8 6L12 16L21 1L28 10" /></svg>
                </div>
              </div>

              {/* Note grid */}
              <div className="w-[1686px] shrink-0 flex flex-col border-l-2 border-black">
                <div className="h-[62px] shrink-0 flex flex-col border-b-2 border-black">
                  <div className="h-[12px] bg-[#6ab1e8]" />
                  <div className="relative flex-1 bg-[#373d48] text-[20px] text-[#b4b8bf]">
                    <span className="absolute left-[535px] top-[10px] -translate-x-1/2 ml-[13px]">1.3</span>
                    <span className="absolute left-[1597px] top-[7px] -translate-x-1/2 ml-[13px]">1.4</span>
                    {gridX.map((x) => <div key={x} className="absolute bottom-0 w-[1px] h-[8px] bg-[#d8d8d8]" style={{ left: x }} />)}
                  </div>
                </div>
                <div className="relative h-[578px] shrink-0 overflow-hidden bg-[#1f2023]">
                  {drums.map(([n]) => <div key={n} className="h-[46.3px] border-b-[3px] border-[#212225] bg-[#2b2d31]" />)}
                  {gridX.map((x) => <div key={x} className="absolute top-0 bottom-0 w-[1px] bg-[#3a3c41]" style={{ left: x }} />)}
                  {notes.map(([r, c]) => (
                    <svg key={`${r}-${c}`} width="21" height="42" viewBox="0 0 21 42" className="absolute" style={{ left: gridX[c], top: r * 46.3 + 1 }}>
                      <path d="M0 0L20 21L0 42Z" fill="#a934d4" />
                    </svg>
                  ))}
                </div>
                <div className="flex-1 border-t-2 border-black bg-[#2b2d31] flex items-center">
                  <Tri w={12} h={20} className="ml-[12px] fill-[#66676a] rotate-180" />
                  <div className="ml-[99px] w-[78px] h-[8px] rounded-[3px] bg-[#5a5b5f]" />
                  <Tri w={12} h={20} className="ml-[1245px] fill-[#66676a]" />
                  <div className="relative ml-[29px] w-[186px] h-[2px] bg-[#77787a]">
                    <div className="absolute left-[46px] top-[-8px] w-[4px] h-[18px] bg-[#9a9a9a]" />
                    <div className="absolute left-[176px] top-[-5px] w-[12px] h-[12px] rounded-full bg-[#9a9a9a]" />
                  </div>
                </div>
              </div>

              {/* Scrollbar strip */}
              <div className="w-[34px] shrink-0 bg-[#35363b] flex flex-col items-center border-l border-[#2d2e32]">
                <div className="h-[62px] w-full bg-[#3f4045] border-b-2 border-[#2d2e32]" />
                <svg width="18" height="16" viewBox="0 0 18 16" fill="#66676a" className="mt-[12px]"><path d="M9 0L18 16H0Z" /></svg>
                <div className="mt-[6px] w-[10px] h-[216px] rounded-[3px] bg-[#5a5b5f]" />
                <svg width="18" height="12" viewBox="0 0 18 12" fill="#66676a" className="mt-[300px]"><path d="M9 12L18 0H0Z" /></svg>
              </div>
              <div className="w-[15px] shrink-0 bg-[#26272b] border-l-[5px] border-[#111] relative">
                <div className="absolute left-[2px] top-[298px] w-[8px] h-[80px] rounded-[3px] bg-[#5a5b5f]" />
              </div>

              {/* Sampler */}
              <div className="w-[760px] shrink-0 flex flex-col bg-[#222326]">
                <div className="h-[63px] shrink-0 flex items-center pl-[7px]">
                  <div className="w-[66px] h-[47px] rounded-[10px] bg-[#25262a] border-2 border-[#1a1b1d] flex items-center justify-center"><Power className="w-[30px] h-[30px] text-[#4a93ec]" strokeWidth={2.6} /></div>
                  <div className="ml-[18px] w-[66px] h-[47px] rounded-[10px] bg-[#25262a] border-2 border-[#1a1b1d] flex items-center justify-center">
                    <svg width="34" height="20" viewBox="0 0 34 20" fill="none" stroke="#c8c8c8" strokeWidth="3"><path d="M0 18H8C8 4 26 4 26 18H34" /><circle cx="17" cy="15" r="3" fill="#c8c8c8" /></svg>
                  </div>
                  <div className="relative ml-[18px] w-[358px] h-[47px] rounded-[10px] bg-[#25262a] border-2 border-[#1a1b1d] flex items-center pl-[14px] text-[22px] text-[#d0d0d0]">
                    <FileStack />
                    <Tri w={15} h={22} className="ml-[30px] fill-[#c8c8c8] rotate-180" />
                    <Tri w={15} h={22} className="ml-[33px] fill-[#c8c8c8]" />
                    <span className="ml-[45px]">Balkan Lines</span>
                    <Caret className="absolute right-[15px] top-[17px] fill-[#d0d0d0]" />
                  </div>
                  <div className="ml-[20px] w-[74px] h-[30px] bg-[#2b66c4] flex items-center justify-center">
                    <svg width="24" height="28" viewBox="0 0 24 28" fill="#dbe7f7"><path d="M0 14L4 6L6 12L8 1L11 13L14 4L16 13L19 7L24 14L19 21L16 15L14 24L11 15L8 27L6 16L4 22Z" /></svg>
                  </div>
                  <div className="ml-[8px] w-[74px] h-[30px] bg-[#2e2f33] flex items-center justify-center">
                    <svg width="20" height="18" viewBox="0 0 20 18" fill="#4a7fc9"><rect width="9" height="8" /><rect x="10" width="9" height="8" /><rect y="9" width="9" height="8" /><rect x="10" y="9" width="9" height="8" /></svg>
                  </div>
                  <div className="ml-[18px]"><Piano /></div>
                </div>
                <div className="h-[246px] shrink-0 bg-[#1d1e20] relative border-t border-[#1a1b1d]">
                  <svg width="760" height="246" viewBox="0 0 760 246" className="absolute inset-0">
                    <rect x="0" y="0" width="2" height="246" fill="#a8c0d8" />
                    <rect x="757" y="0" width="2" height="246" fill="#a8c0d8" />
                    <path d="M2 246V232L13 246ZM758 246H744L758 230Z" fill="#a8c0d8" />
                    <rect x="0" y="58" width="759" height="1.5" fill="#3d7f9c" />
                    <rect x="0" y="180" width="759" height="1.5" fill="#3d7f9c" />
                    <path d={wavePath(59)} fill="#4e9fd3" />
                    <path d={wavePath(181)} fill="#4e9fd3" />
                  </svg>
                </div>
                <div className="h-[44px] shrink-0 bg-[#3a3b40] flex items-center">
                  <Tri w={12} h={16} className="ml-[10px] fill-[#66676a] rotate-180" />
                  <Tri w={12} h={16} className="ml-[322px] fill-[#66676a]" />
                  <span className="ml-[24px] w-[14px] text-[24px] font-bold text-[#8a8a8c]">L</span>
                  <span className="ml-[26px] w-[16px] text-[24px] font-bold text-[#8a8a8c]">R</span>
                  <Search className="ml-[20px] w-[24px] h-[24px] text-[#77787a] rotate-90" strokeWidth={2.6} />
                  <Pad className="ml-[16px] w-[123px] h-[33px]">Normalize</Pad>
                  <Pad className="ml-[9px] w-[124px] h-[33px]">Reverse</Pad>
                </div>
                <div className="h-[144px] shrink-0 bg-[#050505] flex flex-col text-[22px] text-[#b4b4b4]">
                  <div className="h-[50px] flex items-center pl-[6px]">
                    <div className="w-[56px] h-[42px] rounded-[7px] border-[3px] border-[#ef9635] bg-[#5a3512]" />
                    <span className="ml-[26px] w-[66px] whitespace-nowrap text-[#dcdcdc]">Big BD</span>
                    <Pad className="ml-[341px] w-[154px] h-[30px] pr-[20px]">One Shot<Caret className="absolute right-[10px] top-[8px] fill-[#4f87d6]" /></Pad>
                    <Pad className="ml-[8px] w-[94px] h-[30px]">Toggle</Pad>
                  </div>
                  <div className="h-[44px] flex items-center pl-[6px]">
                    <span className="w-[128px]">Output</span>
                    <span className="w-[104px] text-[#e0e0e0]">1</span>
                    <span className="w-[96px]">Quantize</span>
                    <Pad className="w-[153px] h-[34px] pr-[30px]">Off<Caret className="absolute right-[10px] top-[11px] fill-[#4f87d6]" /></Pad>
                    <Pad className="ml-[8px] w-[256px] h-[34px]">Follow Tempo</Pad>
                  </div>
                  <div className="h-[44px] flex items-center pl-[6px]">
                    <span className="w-[71px]">Choke</span>
                    <Pad className="w-[113px] h-[34px] pr-[30px]">Off<Caret className="absolute right-[10px] top-[11px] fill-[#4f87d6]" /></Pad>
                    <span className="ml-[196px] w-[60px]">Start</span>
                    <Mini />
                    <span className="ml-[18px] w-[64px] text-[#4f87d6]">0 s</span>
                    <span className="ml-[24px] w-[50px]">End</span>
                    <Mini />
                    <span className="ml-[14px] text-[#4f87d6]">0 s</span>
                  </div>
                </div>
                <div className="flex-1 min-h-0 bg-[#3a3b40] flex text-[#4f87d6] text-[22px]">
                  <div className="w-[192px] shrink-0 border-r-[3px] border-[#222326] flex flex-col items-center">
                    <div className="h-[44px] flex items-center w-full pl-[33px] pt-[6px]">Pitch</div>
                    <div className="flex items-start pl-[14px] w-full">
                      <KnobCol className="w-[84px]" label="Transp."><Knob id="k1" size={84} angle={0} /></KnobCol>
                      <KnobCol className="ml-[5px] w-[84px]" label="Tune"><Knob id="k2" size={70} angle={0} /></KnobCol>
                    </div>
                  </div>
                  <div className="w-[378px] shrink-0 border-r-[3px] border-[#222326] flex flex-col">
                    <div className="h-[44px] flex items-center pl-[8px] pt-[6px]"><div className="w-[97px] h-[36px] bg-[#2e2f33] border-[3px] border-[#45464a] flex items-center justify-center">Filter</div></div>
                    <div className="flex items-start pl-[12px]">
                      <KnobCol className="w-[84px]" label="Cutoff"><Knob id="k3" size={84} angle={135} arc /></KnobCol>
                      <KnobCol className="ml-[11px] w-[70px]" label="Res"><Knob id="k4" size={70} angle={-135} /></KnobCol>
                      <KnobCol className="ml-[10px] w-[70px]" label="Drive"><Knob id="k5" size={70} angle={-135} /></KnobCol>
                      <div className="ml-[5px] w-[96px] mt-[6px] flex flex-col items-center gap-[4px]">
                        <div className="relative w-[92px] h-[36px] rounded-[6px] bg-[#1e1f22] flex items-center pl-[8px]">
                          <svg width="46" height="30" viewBox="0 0 46 30" fill="none"><path d="M6 8H26L44 24" stroke="#6aaeea" strokeWidth="2" /></svg>
                          <span className="absolute left-[20px] top-[14px] text-[14px] text-[#6aaeea]">MG</span>
                          <Caret className="absolute right-[6px] top-[8px] fill-[#4f87d6]" />
                        </div>
                        <div className="w-[96px] h-[35px] bg-[#2e2f33] border-[3px] border-[#45464a] flex items-center justify-center">Soft</div>
                      </div>
                    </div>
                  </div>
                  <div className="flex-1 flex flex-col relative">
                    <div className="h-[44px] flex items-center pl-[30px] pt-[6px]">Amp</div>
                    <div className="absolute right-[8px] top-[6px] w-[78px] h-[35px] bg-[#2e2f33] border-[3px] border-[#45464a] flex items-center justify-center">ENV</div>
                    <div className="flex items-start pl-[11px]">
                      <KnobCol className="w-[84px]" label="Gain"><Knob id="k6" size={84} angle={0} /></KnobCol>
                      <KnobCol className="ml-[5px] w-[84px]" label="Pan"><Knob id="k7" size={70} angle={0} /></KnobCol>
                    </div>
                  </div>
                </div>
              </div>
            </div>
          </div>
        </div>

        {/* Transport */}
        <div className="flex-1 mt-[7px] bg-[#3a3b40] border-t-2 border-black flex items-start text-[#d0d0d0]">
          <Group className="ml-[11px] mt-[9px] w-[150px] !h-[78px]">
            <svg width="32" height="24" viewBox="0 0 32 24" fill="#c8c8c8" className="ml-[23px]"><rect width="32" height="4" /><rect y="7" width="32" height="4" /><rect y="13" width="32" height="4" /><rect y="20" width="32" height="4" /></svg>
            <span className="ml-[51px] text-[30px] text-[#c8c8c8]">i</span>
          </Group>
          <Group className="ml-[206px] mt-[9px] w-[549px] !h-[78px] !items-stretch">
            <div className="w-[77px] flex flex-col items-center justify-center ml-[3px]">
              <div className="flex items-center gap-[3px]">
                <Tri w={5} h={12} className="fill-[#8a8a8a]" />
                <svg width="30" height="30" viewBox="0 0 30 30" fill="none" stroke="#9a9a9a" strokeWidth="2"><circle cx="15" cy="15" r="13" /><circle cx="8" cy="15" r="1.5" /><circle cx="22" cy="15" r="1.5" /><circle cx="15" cy="8" r="1.5" /><circle cx="10" cy="10" r="1.5" /><circle cx="20" cy="10" r="1.5" /></svg>
                <Tri w={5} h={12} className="fill-[#8a8a8a]" />
              </div>
              <span className="text-[22px] leading-[28px] text-[#b4b4b4]">MIDI</span>
            </div>
            <div className="-ml-[3px] w-[138px] flex flex-col justify-center">
              <div className="w-[130px] h-[10px] bg-[#1e1f22] border-l-2 border-[#4a93ec]" />
              <div className="mt-[6px] w-[130px] h-[10px] bg-[#1e1f22]" />
              <span className="text-[23px] leading-[28px] text-[#b4b4b4]">Performance</span>
            </div>
            <div className="w-[60px] flex items-center justify-center ml-[3px]">
              <svg width="46" height="46" viewBox="0 0 46 46" fill="#a8a8a8">
                {Array.from({ length: 12 }).map((_, i) => {
                  const a = (i * Math.PI) / 6;
                  return <circle key={i} cx={23 + 20 * Math.cos(a)} cy={23 + 20 * Math.sin(a)} r="3" />;
                })}
              </svg>
            </div>
            <div className="w-[125px] pl-[1px] flex flex-col justify-center text-[24px] leading-[32px]"><span>44.1 kHz</span><span>1.5 ms</span></div>
            <div className="flex flex-col justify-center text-[24px] leading-[32px] items-end w-[136px]">
              <span className="w-[136px] pl-[3px]">5:12 days</span>
              <span className="text-[#a5a6a8] text-[23px]">Record Max</span>
            </div>
          </Group>
          <Group className="ml-[27px] mt-[9px] w-[227px] !h-[78px] relative">
            <div className="ml-[10px] w-[52px] flex flex-col items-center">
              <Power className="w-[28px] h-[28px] text-[#b4b4b4]" strokeWidth={2.6} />
              <span className="text-[22px] leading-[32px] text-[#c0c0c0]">Sync</span>
            </div>
            <div className="ml-[14px] w-[75px] flex flex-col gap-[12px]">
              <svg width="75" height="28" viewBox="0 0 75 28" fill="#b4b4b4"><rect width="2" height="28" /><path d="M6 12H12V4H26V24H12V16H6ZM47 2L52 8H60L65 2V26L60 20H52L47 26Z" /></svg>
              <svg width="75" height="26" viewBox="0 0 75 26" fill="#8a8a8a"><path d="M2 4H14L22 18H30V24H18L10 10H2Z" fill="#b4b4b4" /><path d="M44 8H56V0L62 0V26H56V18H44Z" /></svg>
            </div>
            <ChevronUp className="ml-[20px] w-[32px] h-[32px] text-[#d0d0d0]" strokeWidth={3.4} />
          </Group>
          <div className="ml-[28px] w-[924px] h-[90px] shrink-0 rounded-b-[18px] bg-[#1e1f23] border-b-2 border-[#55565a] flex items-center text-[#c4c4c4]">
            <div className="ml-[26px] w-[272px] flex flex-col items-center">
              <span className="text-[39px] leading-[46px] font-bold whitespace-nowrap">00001.01.01.00</span>
              <span className="text-[22px] leading-[26px] text-[#a5a6a8] flex items-center gap-[6px]">Bars<Caret /></span>
            </div>
            <svg width="24" height="34" viewBox="0 0 24 34" fill="#bdbdbd" className="ml-[14px]"><rect width="2" height="34" /><path d="M22 0V34L4 17Z" /></svg>
            <div className="ml-[32px] w-[40px] h-[40px] rounded-[9px] bg-[#4f98fb]" />
            <Tri w={34} h={40} className="ml-[33px] fill-[#bdbdbd]" />
            <div className="ml-[29px] w-[40px] h-[40px] rounded-full bg-[#bdbdbd]" />
            <svg width="64" height="42" viewBox="0 0 64 42" fill="none" stroke="#bdbdbd" strokeWidth="4" className="ml-[35px]"><path d="M20 40H14C6 40 2 32 2 22C2 10 8 2 18 2H46C56 2 62 10 62 22C62 32 58 40 50 40H38" /><path d="M24 24L18 40M40 24L34 40" /></svg>
            <div className="ml-[35px] flex flex-col text-[22px] font-bold text-[#77787a] leading-[30px]"><span>L</span><span>R</span></div>
            <div className="ml-[6px] w-[6px] h-[44px] border-2 border-l-0 border-[#4f98fb]" />
            <div className="ml-[19px] flex flex-col mb-[2px]">
              <span className="text-[28px] leading-[34px] text-[#e0e0e0]">00:00:00.000</span>
              <span className="text-[22px] leading-[26px] text-[#a5a6a8] flex items-center gap-[6px]">Seconds<Caret /></span>
            </div>
          </div>
          <Group className="ml-[22px] mt-[9px] w-[528px] !h-[78px] relative">
            <BarText className="ml-[40px] w-[68px]" top="4/4" bottom="Timing" />
            <BarText className="ml-[20px] w-[68px]" top="Am" bottom="Key" />
            <BarText className="ml-[-1px] w-[134px]" top="0" bottom="Transpose" />
            <div className="ml-[-2px] w-[120px] flex flex-col items-center">
              <span className="text-[24px] leading-[32px] text-[#e0e0e0] flex items-end">
                <svg width="16" height="30" viewBox="0 0 16 30" fill="#e0e0e0" className="mr-[2px]"><ellipse cx="7" cy="25" rx="7" ry="5" /><rect x="12" y="0" width="2" height="25" /></svg>
                =140.00
              </span>
              <span className="text-[22px] leading-[30px] text-[#a5a6a8]">Tempo</span>
            </div>
            <svg width="44" height="40" viewBox="0 0 44 40" fill="#cfcfcf" className="ml-[10px]"><path d="M18 2H26L44 40H6Z" /><path d="M2 8L24 36" stroke="#35363b" strokeWidth="5" /><path d="M2 8L24 36" stroke="#cfcfcf" strokeWidth="2" /></svg>
            <Fold className="fill-[#77787a]" />
          </Group>
          <Group className="ml-[27px] mt-[9px] w-[209px] !h-[78px] flex-col !items-start pl-[18px] pt-[10px]">
            <div className="flex w-[180px] h-[18px] gap-[2px]">
              <div className="flex-1 flex flex-col gap-[2px]"><div className="flex-1 bg-[#1e1f22]" /><div className="flex-1 bg-[#1e1f22]" /></div>
              <div className="w-[44px] bg-[#2a2b2e]" />
            </div>
            <div className="mt-[16px] flex items-center">
              <div className="relative w-[132px] h-[16px] rounded-full bg-[#2b2c30]">
                <div className="h-full w-[98px] rounded-full bg-[#66676a]" />
                <div className="absolute left-[94px] top-[-3px] w-[6px] h-[22px] rounded-[2px] bg-[#c0c0c0]" />
              </div>
              <div className="ml-[14px] w-[18px] h-[18px] rounded-full bg-[#4a93ec]" />
              <div className="-ml-[2px] w-[16px] h-[18px] rounded-full border-[3px] border-[#4a93ec]" />
            </div>
          </Group>
          <Group className="ml-[207px] mt-[9px] w-[293px] !h-[78px] pl-[5px] text-[#c8c8c8]">
            <div className="w-[65px] h-[66px] rounded-[14px] bg-[#2b66c4] flex items-center justify-center">
              <svg width="32" height="40" viewBox="0 0 32 40" fill="#fff"><path d="M24 2C28 0 32 4 30 8L10 36L1 40L2 30Z" /></svg>
            </div>
            <svg width="32" height="48" viewBox="0 0 32 48" fill="#c0c0c0" className="ml-[22px]"><rect x="3" y="0" width="3" height="48" /><rect x="0" y="14" width="9" height="12" rx="3" /><rect x="14" y="14" width="10" height="20" rx="2" /><rect x="28" y="14" width="4" height="20" rx="1" /></svg>
            <svg width="36" height="48" viewBox="0 0 36 48" fill="#c0c0c0" className="ml-[37px]"><rect x="3" y="0" width="3" height="48" /><rect y="8" width="9" height="12" rx="3" /><rect x="16" y="0" width="3" height="48" /><rect x="13" y="26" width="9" height="12" rx="3" /><rect x="30" y="0" width="3" height="48" /><rect x="27" y="12" width="9" height="12" rx="3" /></svg>
            <Folder className="ml-[27px] w-[46px] h-[46px]" strokeWidth={1.8} />
          </Group>
        </div>
      </div>
    </div>
  );
}
